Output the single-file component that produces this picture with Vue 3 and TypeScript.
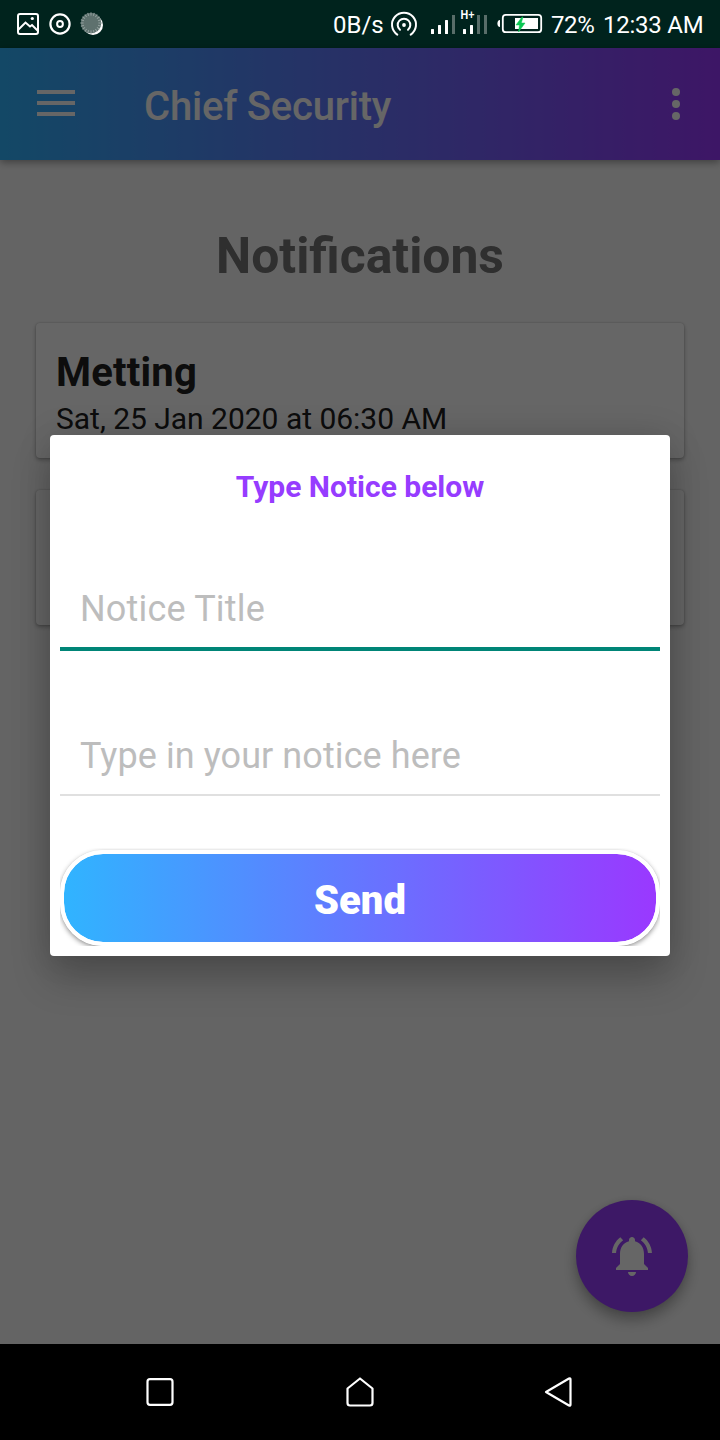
<script setup lang="ts">
import { ref } from 'vue'

interface Notice {
  title: string
  date: string
}

const notices = ref<Notice[]>([
  { title: 'Metting', date: 'Sat, 25 Jan 2020 at 06:30 AM' },
  { title: '', date: '' },
])
const noticeTitle = ref('')
const noticeBody = ref('')
const spokes = Array.from({ length: 20 }, (_, i) => i * 18)
</script>

<template>
  <div class="device">
    <header class="status">
      <svg class="status-left" width="120" height="48" viewBox="0 0 120 48" fill="none">
        <g stroke="#fff" stroke-width="2">
          <rect x="18" y="14" width="20" height="20" rx="2" />
          <path d="M18 30 L25.5 22.5 L30 26.5 L32 25 L38 31" />
          <circle cx="60" cy="24" r="9.6" stroke-width="2.2" />
          <circle cx="60" cy="24" r="2.9" />
        </g>
        <circle cx="32.3" cy="18.5" r="1.6" fill="#fff" />
        <circle cx="93" cy="25" r="10" fill="#fff" />
        <circle cx="91" cy="23" r="10.3" fill="#5e716e" />
        <g stroke="#93a19f" stroke-width="1">
          <path v-for="a in spokes" :key="a" d="M91 12.4 V15.6" :transform="`rotate(${a} 91 23)`" />
        </g>
      </svg>
      <span class="rate">0B/s</span>
      <svg class="status-mid" width="168" height="48" viewBox="383 0 168 48" fill="none">
        <g stroke="#fff" stroke-width="2" stroke-linecap="round">
          <path d="M397.3 34.6 A12 12 0 1 1 410.7 34.6" />
          <path d="M400 29.8 A6.3 6.3 0 1 1 408 29.8" />
        </g>
        <circle cx="404" cy="25" r="1.9" fill="#fff" />
        <g fill="#fff">
          <rect x="431" y="29" width="3" height="5" rx=".5" />
          <rect x="438" y="25" width="3" height="9" rx=".5" />
          <rect x="445" y="20" width="3" height="14" rx=".5" />
          <rect x="463" y="29" width="3" height="5" rx=".5" />
          <rect x="470" y="25" width="3" height="9" rx=".5" />
        </g>
        <g fill="#586d69">
          <rect x="452" y="15" width="3" height="19" />
          <rect x="477" y="15" width="3" height="19" />
          <rect x="484" y="15" width="3" height="19" />
        </g>
        <text class="network" x="460.5" y="19" textLength="14" lengthAdjust="spacingAndGlyphs">H+</text>
        <path d="M500 20 V27 C496.5 27 496.5 20 500 20Z" fill="#fff" />
        <rect x="502.8" y="14.8" width="38.4" height="17.4" rx="3" stroke="#fff" stroke-width="1.8" />
        <rect x="515" y="18" width="23" height="11" fill="#fff" />
        <path d="M522 17 L516 25 H519.5 L518.5 32 L525 23 H521.3 L523 17Z" fill="#0bc653" stroke="#0bc653" stroke-width=".5" />
      </svg>
      <span class="percent">72%</span>
      <span class="clock">12:33 AM</span>
    </header>

    <main class="screen">
      <div class="toolbar">
        <svg class="burger" width="38" height="26" viewBox="0 0 38 26">
          <path d="M0 2 H38 M0 13 H38 M0 24 H38" stroke="#fff" stroke-width="4" />
        </svg>
        <h1>Chief Security</h1>
        <svg class="more" width="8" height="32" viewBox="0 0 8 32" fill="#fff">
          <circle cx="4" cy="4" r="4" />
          <circle cx="4" cy="16" r="4" />
          <circle cx="4" cy="28" r="4" />
        </svg>
      </div>

      <h2 class="heading">Notifications</h2>
      <section class="cards">
        <article v-for="(notice, i) in notices" :key="i" class="card">
          <h3>{{ notice.title }}</h3>
          <p>{{ notice.date }}</p>
        </article>
      </section>

      <div class="fab">
        <svg width="48" height="48" viewBox="0 0 24 24" fill="#fff">
          <path d="M7.58 4.08 6.15 2.65C3.75 4.48 2.17 7.3 2.03 10.5h2c.15-2.65 1.51-4.97 3.55-6.42zm12.39 6.42h2c-.15-3.2-1.73-6.02-4.12-7.85l-1.42 1.43c2.02 1.45 3.39 3.77 3.54 6.42zM18 11c0-3.07-1.64-5.64-4.5-6.32V4c0-.83-.67-1.5-1.5-1.5s-1.5.67-1.5 1.5v.68C7.63 5.36 6 7.92 6 11v6l-2 1v1h16v-1l-2-2v-5zm-8 9h4c0 1.1-.9 2-2 2s-2-.9-2-2zM6 16l-2 2v1h4z" />
        </svg>
      </div>

      <div class="scrim">
        <form class="dialog" @submit.prevent>
          <p class="dialog-title">Type Notice below</p>
          <input v-model="noticeTitle" class="field focused" placeholder="Notice Title" />
          <input v-model="noticeBody" class="field body" placeholder="Type in your notice here" />
          <div class="button-clip">
            <button type="submit" class="send">Send</button>
          </div>
        </form>
      </div>
    </main>

    <nav class="navbar">
      <svg width="720" height="96" viewBox="0 0 720 96" fill="none" stroke="#fff" stroke-width="2.2" stroke-linejoin="round">
        <rect x="147.5" y="35.2" width="25" height="25.6" rx="2.5" />
        <path d="M360 34.5 L372.5 44.5 V59 Q372.5 61.5 370 61.5 H350 Q347.5 61.5 347.5 59 V44.5 Z" />
        <path d="M546 48 L569 34.5 Q570.5 34 570.5 35.5 V60.5 Q570.5 62 569 61.5 Z" />
      </svg>
    </nav>
  </div>
</template>

<style>
body {
  margin: 0;
  background: #000;
}
</style>

<style scoped>
.device {
  width: 720px;
  height: 1440px;
  display: flex;
  flex-direction: column;
  overflow: hidden;
  font-family: Roboto, "Noto Sans", sans-serif;
}
h1, h2, h3, p {
  margin: 0;
}
.status {
  height: 48px;
  display: flex;
  align-items: center;
  background: #00231d;
  color: #fff;
  font-size: 24px;
  line-height: 48px;
  white-space: nowrap;
}
.status svg {
  flex: none;
}
.rate {
  width: 50px;
  margin-left: 213px;
  padding-top: 2px;
}
.percent {
  width: 52px;
  padding-top: 2px;
  letter-spacing: -.4px;
}
.clock {
  padding-top: 2px;
  letter-spacing: -.25px;
}
.network {
  font: 700 12px "Liberation Sans", sans-serif;
  fill: #fff;
}
.screen {
  position: relative;
  height: 1296px;
  background: #fafafa;
}
.toolbar {
  height: 112px;
  display: flex;
  align-items: center;
  box-sizing: border-box;
  padding: 0 40px 0 37px;
  background: linear-gradient(90deg, #30b4ff, #9a38ff);
  box-shadow: 0 2px 8px rgba(0, 0, 0, .4);
}
.burger {
  margin-top: -2px;
}
h1 {
  flex: 1;
  margin-left: 69px;
  padding-top: 6px;
  font-size: 40px;
  font-weight: 500;
  line-height: 48px;
  letter-spacing: -.2px;
  color: #fff;
}
.heading {
  margin-top: 66px;
  font-size: 49.8px;
  line-height: 60px;
  font-weight: 700;
  text-align: center;
  color: #757575;
}
.cards {
  display: flex;
  flex-direction: column;
  gap: 32px;
  padding: 37px 36px 0;
}
.card {
  height: 135px;
  box-sizing: border-box;
  padding: 26px 20px 0;
  border-radius: 4px;
  background: #fff;
  box-shadow: 0 2px 4px rgba(0, 0, 0, .3), 0 0 2px rgba(0, 0, 0, .2);
  color: #212121;
}
.card h3 {
  height: 47px;
  font-size: 40px;
  line-height: 47px;
  letter-spacing: .2px;
}
.card p {
  font-size: 30px;
  line-height: 46px;
  letter-spacing: -.02px;
}
.fab {
  position: absolute;
  right: 32px;
  bottom: 32px;
  width: 112px;
  height: 112px;
  display: grid;
  place-items: center;
  border-radius: 50%;
  background: #983cff;
  box-shadow: 0 8px 14px rgba(0, 0, 0, .3), 0 0 6px rgba(0, 0, 0, .08);
}
.scrim {
  position: absolute;
  inset: 0;
  padding: 387px 50px 0;
  background: rgba(0, 0, 0, .6);
}
.dialog {
  height: 521px;
  box-sizing: border-box;
  display: flex;
  flex-direction: column;
  padding: 32px 10px 10px;
  border-radius: 4px;
  background: #fff;
  box-shadow: 0 22px 38px rgba(0, 0, 0, .22), 0 0 34px rgba(0, 0, 0, .12);
}
.dialog-title {
  font-size: 30px;
  font-weight: 700;
  line-height: 40px;
  text-align: center;
  color: #963cff;
}
.field {
  height: 84px;
  margin-top: 60px;
  box-sizing: border-box;
  padding: 5px 20px 0;
  border: 0;
  border-bottom: 2px solid #e0e0e0;
  border-radius: 0;
  outline: none;
  background: none;
  font: 400 36px Roboto, sans-serif;
  letter-spacing: .08px;
}
.field.focused {
  padding-top: 4px;
  border-bottom: 4px solid #008577;
  letter-spacing: .18px;
}
.field.body {
  margin-top: 61px;
}
.field::placeholder {
  color: #bdbdbd;
  opacity: 1;
}
.button-clip {
  height: 98px;
  margin-top: 52px;
  padding-top: 2px;
  box-sizing: border-box;
  overflow: hidden;
}
.send {
  display: block;
  width: 100%;
  height: 96px;
  padding: 5px 0 0;
  border: 4px solid #fff;
  border-radius: 43px;
  background: linear-gradient(90deg, #30b4ff, #9a38ff) padding-box;
  box-shadow: 0 2px 5px rgba(0, 0, 0, .42), 0 0 1px rgba(0, 0, 0, .14);
  color: #fff;
  font: 900 40px Roboto, sans-serif;
}
.navbar {
  height: 96px;
  background: #000;
}
.navbar svg {
  display: block;
}
</style>
